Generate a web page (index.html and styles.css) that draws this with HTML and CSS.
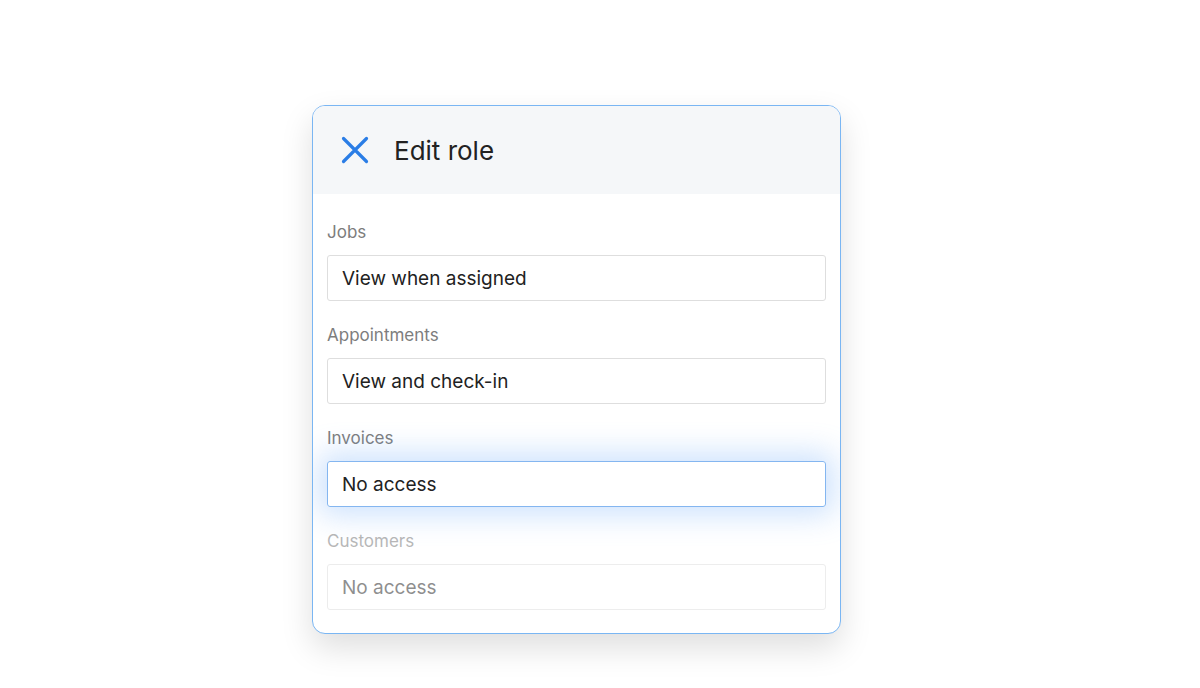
FILE: index.html
```html
<!DOCTYPE html>
<html>
<head>
<meta charset="utf-8">
<link rel="stylesheet" href="styles.css">
</head>
<body>
<div class="page">
  <div class="card">
    <div class="card-header">
      <svg class="close" width="28" height="28" viewBox="0 0 28 28"><path d="M2.5 2.5 L25.5 25.5 M25.5 2.5 L2.5 25.5" stroke="#2a7de6" stroke-width="3.2" stroke-linecap="round" fill="none"/></svg>
      <h1 class="title">Edit role</h1>
    </div>
    <div class="card-body">
      <div class="field">
        <div class="label">Jobs</div>
        <div class="select">View when assigned</div>
      </div>
      <div class="field">
        <div class="label">Appointments</div>
        <div class="select">View and check-in</div>
      </div>
      <div class="field">
        <div class="label">Invoices</div>
        <div class="select focused">No access</div>
      </div>
      <div class="field faded">
        <div class="label">Customers</div>
        <div class="select">No access</div>
      </div>
    </div>
  </div>
</div>
</body>
</html>
```
FILE: styles.css
```css
html, body {
  margin: 0;
  padding: 0;
  background: #ffffff;
  font-family: "Inter", "Liberation Sans", sans-serif;
}
.page {
  min-height: 688px;
  box-sizing: border-box;
  padding: 105px 0 0 312px;
}
.card {
  width: 527px;
  border: 1.5px solid #7ab6f3;
  border-radius: 13px;
  background: #fff;
  overflow: hidden;
  box-shadow: 0 14px 32px rgba(0, 0, 0, 0.13);
}
.card-header {
  height: 88px;
  background: #f5f7f9;
  display: flex;
  align-items: center;
  padding-left: 28px;
  gap: 25px;
}
.close {
  display: block;
}
.title {
  margin: 0;
  font-size: 26px;
  font-weight: 400;
  color: #222;
}
.card-body {
  padding: 26px 14px 23px 14px;
  display: flex;
  flex-direction: column;
  gap: 22px;
}
.field {
  display: flex;
  flex-direction: column;
  gap: 11px;
}
.label {
  font-size: 17px;
  line-height: 24px;
  color: #7d7d7d;
}
.select {
  height: 46px;
  box-sizing: border-box;
  border: 1.5px solid #dedede;
  border-radius: 3px;
  padding-left: 14px;
  display: flex;
  align-items: center;
  font-size: 19px;
  color: #222;
}
.select.focused {
  border-color: #84b6f0;
  box-shadow: 0 0 30px 8px rgba(100, 165, 250, 0.32);
}
.faded {
  opacity: 0.55;
}
.faded .select {
  color: #333;
}
```
